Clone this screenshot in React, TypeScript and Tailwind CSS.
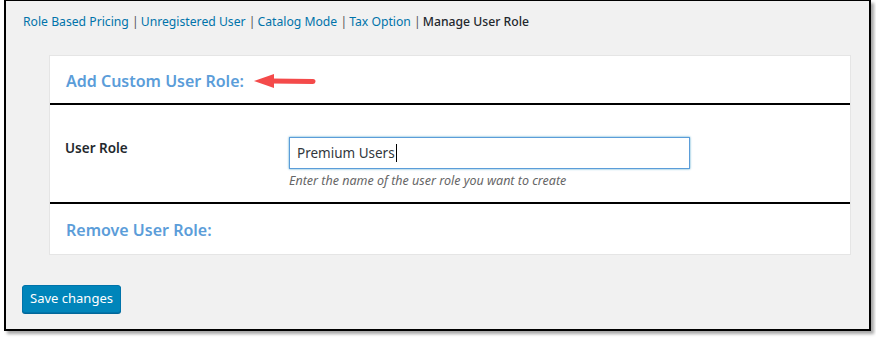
export default function App() {
  const font = { fontFamily: '"Noto Sans", "Open Sans", sans-serif' }
  return (
    <div className="w-[876px] h-[341px] bg-white" style={font}>
      <div className="ml-[4px] w-[867px] h-[331px] border-2 border-t border-black bg-[#f1f1f1] shadow-[3px_3px_3px_rgba(0,0,0,0.35)] flex flex-col">
        <ul className="flex items-center pl-[17px] pt-[12px] text-[12.2px] leading-[18px] text-[#555]">
          <li><a className="text-[#0073aa]">Role Based Pricing</a> <span className="mr-[2px]">|</span></li>
          <li><a className="text-[#0073aa]">Unregistered User</a> <span className="mr-[2px]">|</span></li>
          <li><a className="text-[#0073aa]">Catalog Mode</a> <span className="mr-[2px]">|</span></li>
          <li><a className="text-[#0073aa]">Tax Option</a> <span className="mr-[2px]">|</span></li>
          <li className="text-[#23282d] font-medium">Manage User Role</li>
        </ul>

        <div className="ml-[43px] mt-[24px] w-[802px] border border-[#e5e5e5] bg-white">
          <div className="h-[49px] flex items-center pl-[16px] pt-[3px] border-b-2 border-black">
            <h2 className="text-[16px] font-semibold text-[#5b9dd9]">Add Custom User Role:</h2>
            <svg width="64" height="20" viewBox="0 0 64 20" className="ml-[9px]">
              <path d="M18 10 L60 10.5" stroke="#f44a4a" strokeWidth="5" strokeLinecap="round" />
              <polygon points="1,10 21,3 21,17" fill="#f44a4a" />
            </svg>
          </div>

          <div className="h-[99px] flex border-b-2 border-black">
            <div className="w-[239px] pl-[15px] pt-[33px] text-[13.5px] font-semibold text-[#23282d]">User Role</div>
            <div className="pt-[32px]">
              <div className="w-[401px] h-[32px] border border-[#5b9dd9] shadow-[0_0_2px_rgba(30,140,190,0.8)] flex items-center pl-[7px] text-[13.5px] text-[#32373c]">
                Premium Users<span className="w-px h-[18px] bg-black ml-[1px]" />
              </div>
              <p className="mt-[3px] text-[12.5px] italic text-[#666]">Enter the name of the user role you want to create</p>
            </div>
          </div>

          <div className="h-[50px] flex items-center pl-[16px] pt-[2px]">
            <h2 className="text-[16px] font-semibold text-[#5b9dd9]">Remove User Role:</h2>
          </div>
        </div>

        <div className="ml-[16px] mt-[30px]">
          <button className="w-[99px] h-[28px] rounded-[3px] border border-[#0073aa] bg-[#0085ba] text-white text-[13px] shadow-[0_1px_0_#006799]">Save changes</button>
        </div>
      </div>
    </div>
  )
}
